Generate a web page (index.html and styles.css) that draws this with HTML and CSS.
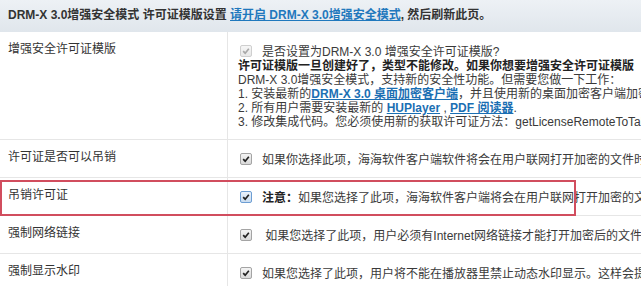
FILE: index.html
```html
<!DOCTYPE html>
<html lang="zh-CN">
<head>
    <meta charset="UTF-8">
    <title>DRM-X 3.0 增强安全模式 许可证模版设置</title>
    <link rel="stylesheet" href="styles.css">
</head>
<body>
    <div class="panel-head">
        DRM-X 3.0增强安全模式 许可证模版设置 <a href="#">请开启 DRM-X 3.0增强安全模式</a>, 然后刷新此页。
    </div>

    <table class="settings">
        <tr>
            <td class="label">增强安全许可证模版</td>
            <td class="value">
                <div class="line"><span class="cb cb-disabled"><svg viewBox="0 0 12 12"><path d="M2.6 6.2 L5 8.6 L9.4 3.2"/></svg></span>是否设置为DRM-X 3.0 增强安全许可证模版?</div>
                <div class="line strong">许可证模版一旦创建好了，类型不能修改。如果你想要增强安全许可证模版</div>
                <div class="line">DRM-X 3.0增强安全模式，支持新的安全性功能。但需要您做一下工作：</div>
                <div class="line">1. 安装最新的<a href="#" class="link">DRM-X 3.0 桌面加密客户端</a>，并且使用新的桌面加密客户端加密</div>
                <div class="line">2. 所有用户需要安装最新的 <a href="#" class="link">HUPlayer</a> , <a href="#" class="link">PDF 阅读器</a>.</div>
                <div class="line">3. 修改集成代码。您必须使用新的获取许可证方法：getLicenseRemoteToTable</div>
            </td>
        </tr>
        <tr>
            <td class="label">许可证是否可以吊销</td>
            <td class="value">
                <div class="line"><span class="cb"><svg viewBox="0 0 12 12"><path d="M2.6 6.2 L5 8.6 L9.4 3.2"/></svg></span>如果你选择此项，海海软件客户端软件将会在用户联网打开加密的文件时</div>
            </td>
        </tr>
        <tr class="marked">
            <td class="label">吊销许可证<div class="mark-box"></div></td>
            <td class="value">
                <div class="line"><span class="cb cb-focus"><svg viewBox="0 0 12 12"><path d="M2.6 6.2 L5 8.6 L9.4 3.2"/></svg></span><b>注意：</b>如果您选择了此项，海海软件客户端将会在用户联网打开加密的文件</div>
            </td>
        </tr>
        <tr>
            <td class="label">强制网络链接</td>
            <td class="value">
                <div class="line"><span class="cb"><svg viewBox="0 0 12 12"><path d="M2.6 6.2 L5 8.6 L9.4 3.2"/></svg></span>&nbsp;如果您选择了此项，用户必须有Internet网络链接才能打开加密后的文件</div>
            </td>
        </tr>
        <tr>
            <td class="label">强制显示水印</td>
            <td class="value">
                <div class="line"><span class="cb"><svg viewBox="0 0 12 12"><path d="M2.6 6.2 L5 8.6 L9.4 3.2"/></svg></span>如果您选择了此项，用户将不能在播放器里禁止动态水印显示。这样会提高</div>
            </td>
        </tr>
    </table>
</body>
</html>
```

FILE: styles.css
```css
html,
body {
    overflow: hidden;
}

body {
    margin: 0;
    padding: 0;
    background-color: #fff;
    font-family: "Liberation Sans", Arial, "Noto Sans CJK SC", sans-serif;
    font-size: 12px;
    color: #3a3a3a;
    width: 900px;
}

.panel-head {
    height: 32px;
    line-height: 31px;
    padding-left: 8px;
    background: linear-gradient(#edf1f5, #e0e6ec);
    font-weight: bold;
    font-size: 12px;
    color: #333;
    white-space: nowrap;
}

.panel-head a {
    color: #1f78bd;
    text-decoration: underline;
}

.settings {
    border-collapse: collapse;
    width: 900px;
}

.settings td {
    vertical-align: top;
    border-bottom: 1px solid #e6e6e6;
    white-space: nowrap;
}

.label {
    width: 219px;
    padding: 10px 0 0 8px;
    line-height: 14px;
    border-right: 1px solid #e6e6e6;
    color: #333;
}

.value {
    padding: 13px 0 10px 10px;
}

.line {
    height: 14px;
    line-height: 14px;
}

.strong {
    font-weight: bold;
    color: #222;
}

.line b {
    color: #222;
}

.link {
    color: #1b6fb3;
    font-weight: bold;
    text-decoration: underline;
}

.cb {
    display: inline-block;
    vertical-align: -1px;
    width: 10px;
    height: 10px;
    margin: 0 10px 0 2px;
    border: 1px solid #a4a4a4;
    border-radius: 2px;
    background: linear-gradient(#f4f4f4, #d9d9d9);
}

.cb svg {
    display: block;
    width: 10px;
    height: 10px;
}

.cb path {
    fill: none;
    stroke: #222;
    stroke-width: 2;
}

.cb-disabled {
    border-color: #cfcfcf;
    background: linear-gradient(#f6f6f6, #e8e8e8);
}

.cb-disabled path {
    stroke: #a8a8a8;
}

.cb-focus {
    border-color: #6d9ed3;
    background: linear-gradient(#eaf2fb, #c9dcf0);
}

.marked .label {
    position: relative;
}

.mark-box {
    position: absolute;
    left: 0;
    top: 2px;
    width: 572px;
    height: 32px;
    border: 2px solid #d14d5e;
    pointer-events: none;
}
```
